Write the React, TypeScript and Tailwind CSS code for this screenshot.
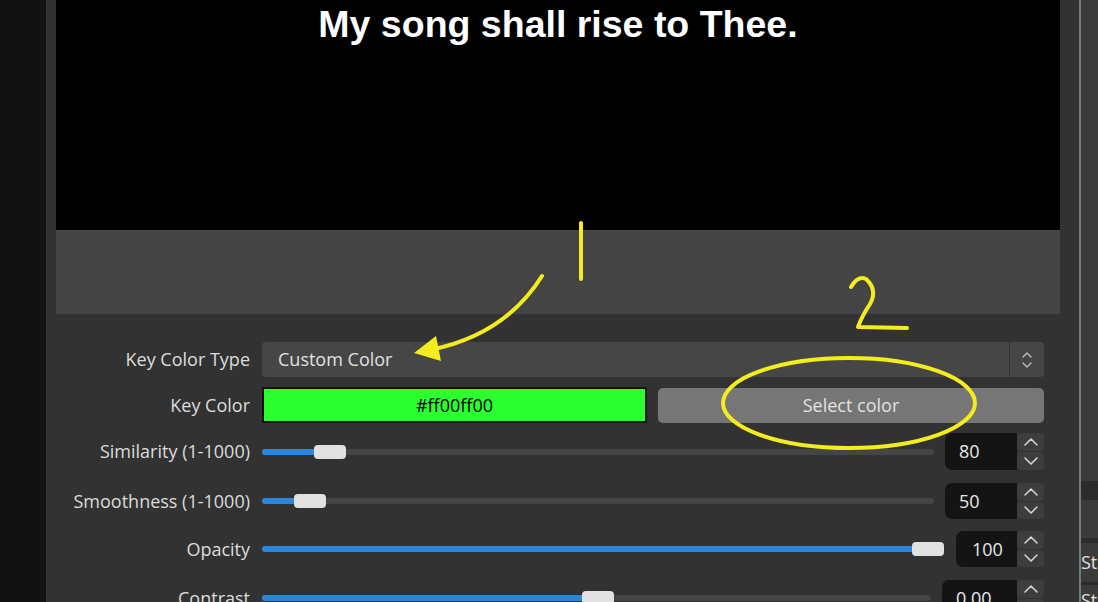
import React from "react";

const FONT = { fontFamily: '"Open Sans", "Noto Sans", sans-serif' };

function Chevron({ up, w = 14, h = 8, color = "#d2d2d2", sw = 1.6 }: { up: boolean; w?: number; h?: number; color?: string; sw?: number }) {
  const d = up ? `M1 ${h - 1} L${w / 2} 1 L${w - 1} ${h - 1}` : `M1 1 L${w / 2} ${h - 1} L${w - 1} 1`;
  return (
    <svg width={w} height={h} viewBox={`0 0 ${w} ${h}`}>
      <path d={d} fill="none" stroke={color} strokeWidth={sw} strokeLinecap="round" strokeLinejoin="round" />
    </svg>
  );
}

function Spin({ value, fieldClass, textClass }: { value: string; fieldClass: string; textClass: string }) {
  return (
    <div className="flex h-full">
      <div className={`flex items-center rounded-l-[7px] bg-[#141414] text-[18px] text-[#e8e8e8] ${fieldClass}`}>
        <span className={textClass}>{value}</span>
      </div>
      <div className="flex w-[27px] flex-col gap-[1px]">
        <div className="flex flex-1 items-center justify-center rounded-[4px] bg-[#3d3d3d]">
          <Chevron up />
        </div>
        <div className="flex flex-1 items-center justify-center rounded-[4px] bg-[#3d3d3d]">
          <Chevron up={false} />
        </div>
      </div>
    </div>
  );
}

function Slider({ fillClass, handleClass }: { fillClass: string; handleClass: string }) {
  return (
    <div className="relative flex h-[14px] flex-1 items-center">
      <div className="h-[6px] w-full rounded-full bg-[#454545]" />
      <div className={`absolute left-0 top-[4px] h-[6px] rounded-full bg-[#2a86da] ${fillClass}`} />
      <div className={`absolute top-0 h-[14px] w-[32px] rounded-[4px] bg-[#e1e1e1] ${handleClass}`} />
    </div>
  );
}

function Row({ label, children, className }: { label: string; children: React.ReactNode; className: string }) {
  return (
    <div className={`flex shrink-0 items-center ${className}`}>
      <div className="w-[194px] shrink-0 whitespace-nowrap text-right text-[18px] text-[#dcdcdc]">{label}</div>
      <div className="ml-[12px] flex h-full flex-1 items-center">{children}</div>
    </div>
  );
}

export default function App() {
  return (
    <div className="relative flex h-[602px] w-[1098px] overflow-hidden bg-[#333333]" style={FONT}>
      <div className="w-[46px] shrink-0 bg-[#121212]" />
      <div className="flex min-h-0 flex-1 flex-col overflow-hidden bg-[#323232] pl-[10px] pr-[19px]">
        <div className="flex h-[230px] shrink-0 justify-center bg-black pt-[6px]">
          <div
            className="text-[37.5px] font-bold leading-none text-white"
            style={{ fontFamily: '"Liberation Sans", Arial, sans-serif' }}
          >
            My song shall rise to Thee.
          </div>
        </div>
        <div className="h-[84px] shrink-0 bg-[#444444]" />
        <div className="flex shrink-0 flex-col pr-[16px] pt-[28px]">
          <Row label="Key Color Type" className="h-[35px]">
            <div className="flex h-full flex-1 gap-[1px]">
              <div className="flex flex-1 items-center rounded-l-[4px] bg-[#464646] pl-[16px] text-[18px] text-[#e0e0e0]">
                Custom Color
              </div>
              <div className="flex w-[34px] flex-col items-center justify-center gap-[4px] rounded-r-[4px] bg-[#464646]">
                <Chevron up w={10} h={6} color="#bdbdbd" sw={1.4} />
                <Chevron up={false} w={10} h={6} color="#bdbdbd" sw={1.4} />
              </div>
            </div>
          </Row>
          <Row label="Key Color" className="mt-[10px] h-[36px]">
            <div className="flex h-full w-[385px] items-center justify-center border-2 border-[#111111] bg-[#2bff2f] text-[18px] text-black">
              #ff00ff00
            </div>
            <div className="ml-[11px] flex h-[35px] flex-1 items-center justify-center rounded-[5px] bg-[#767676] text-[18px] text-[#e2e2e2]">
              Select color
            </div>
          </Row>
          <Row label="Similarity (1-1000)" className="mt-[10px] h-[37px]">
            <Slider fillClass="w-[56px]" handleClass="left-[52px]" />
            <div className="ml-[11px] h-full">
              <Spin value="80" fieldClass="w-[72px]" textClass="pl-[14px]" />
            </div>
          </Row>
          <Row label="Smoothness (1-1000)" className="mt-[13px] h-[36px]">
            <Slider fillClass="w-[36px]" handleClass="left-[32px]" />
            <div className="ml-[11px] h-full">
              <Spin value="50" fieldClass="w-[72px]" textClass="pl-[14px]" />
            </div>
          </Row>
          <Row label="Opacity" className="mt-[12px] h-[36px]">
            <Slider fillClass="w-[654px]" handleClass="left-[650px]" />
            <div className="ml-[13px] h-full">
              <Spin value="100" fieldClass="w-[61px]" textClass="pl-[16px]" />
            </div>
          </Row>
          <Row label="Contrast" className="mt-[13px] h-[36px]">
            <Slider fillClass="w-[324px]" handleClass="left-[320px]" />
            <div className="ml-[11px] h-full">
              <Spin value="0.00" fieldClass="w-[75px]" textClass="pl-[14px]" />
            </div>
          </Row>
        </div>
      </div>
      <div className="w-[2px] shrink-0 bg-[#6f7d7d]" />
      <div className="flex w-[17px] shrink-0 flex-col bg-[#3b3b3b] text-[18px] text-[#e0e0e0]">
        <div className="h-[481px] shrink-0" />
        <div className="h-[19px] shrink-0 bg-[#2c2c2c]" />
        <div className="h-[38px] shrink-0" />
        <div className="h-[5px] shrink-0 bg-[#2b2b2b]" />
        <div className="flex h-[39px] shrink-0 items-center overflow-hidden whitespace-nowrap">St</div>
        <div className="h-[3px] shrink-0 bg-[#2b2b2b]" />
        <div className="shrink-0 overflow-hidden whitespace-nowrap pt-[2px]">St</div>
      </div>

      <svg className="pointer-events-none absolute left-0 top-0" width="1098" height="602" viewBox="0 0 1098 602">
        <g fill="none" stroke="#f3ec1f" strokeWidth="4" strokeLinecap="round" strokeLinejoin="round">
          <path d="M581 223 L581 279" />
          <path d="M542 276 Q505 335 430 350" />
          <path d="M851 287 Q858 275 866 279 Q878 290 870 304 Q862 316 858 327 L907 328" />
          <ellipse cx="849" cy="403" rx="126" ry="45" />
        </g>
        <path d="M414 353 L436 336 L441 361 Z" fill="#f3ec1f" />
      </svg>
    </div>
  );
}
